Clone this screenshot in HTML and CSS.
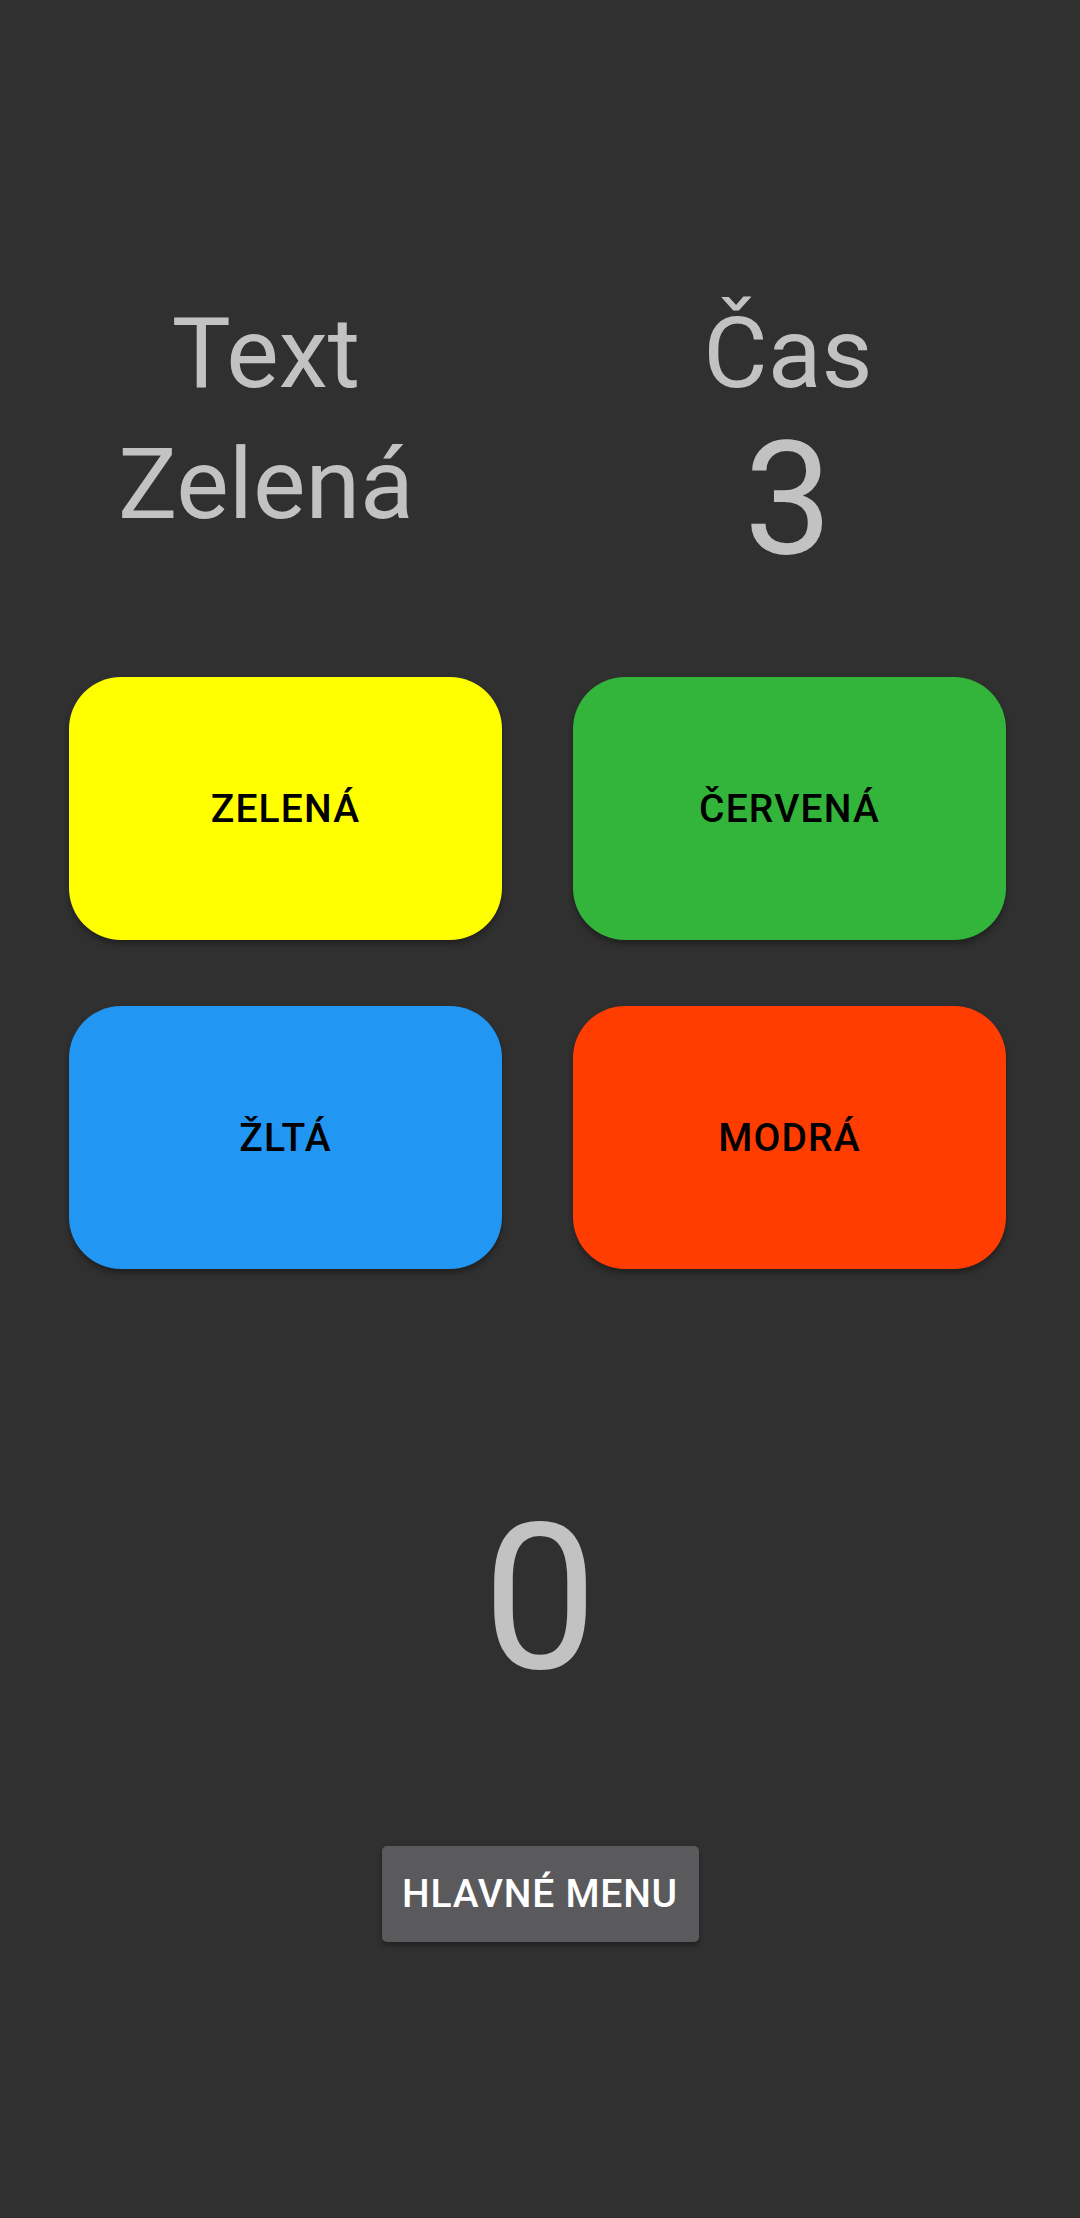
FILE: index.html
```html
<!DOCTYPE html>
<html lang="sk">
<head>
<meta charset="utf-8">
<title>Hra farieb</title>
<link rel="stylesheet" href="styles.css">
</head>
<body>
<main class="screen">
  <section class="header">
    <div class="col col-left">
      <div class="label">Text</div>
      <div class="label">Zelená</div>
    </div>
    <div class="col col-right">
      <div class="label">Čas</div>
      <div class="timer">3</div>
    </div>
  </section>
  <section class="choices">
    <button class="choice yellow">ZELENÁ</button>
    <button class="choice green">ČERVENÁ</button>
    <button class="choice blue">ŽLTÁ</button>
    <button class="choice red">MODRÁ</button>
  </section>
  <div class="score">0</div>
  <div class="menu-wrap">
    <button class="menu-btn">HLAVNÉ MENU</button>
  </div>
</main>
</body>
</html>
```
FILE: styles.css
```css
html, body {
  margin: 0;
  padding: 0;
  background: #303030;
}
body {
  width: 1080px;
  height: 2218px;
  font-family: Roboto, "Noto Sans", sans-serif;
  overflow: hidden;
}
.screen {
  display: flex;
  flex-direction: column;
  padding-top: 288px;
}
.header {
  display: grid;
  grid-template-columns: 532px 512px;
  align-items: start;
}
.col {
  display: flex;
  flex-direction: column;
  align-items: center;
}
.label {
  font-size: 99px;
  line-height: 131px;
  color: #c2c2c2;
  font-weight: 400;
}
.timer {
  font-size: 157px;
  line-height: 161px;
  color: #c2c2c2;
}
.choices {
  margin-top: 97px;
  padding-left: 69px;
  display: grid;
  grid-template-columns: 433px 433px;
  grid-auto-rows: 263px;
  column-gap: 71px;
  row-gap: 66px;
}
.choice {
  border: none;
  border-radius: 52px;
  font-family: Roboto, "Noto Sans", sans-serif;
  font-weight: 500;
  font-size: 39px;
  letter-spacing: 0.03em;
  color: #000;
  box-shadow: 0 4px 6px rgba(0, 0, 0, 0.35);
  padding: 0;
}
.yellow { background: #ffff00; }
.green { background: #32b53a; }
.blue { background: #2196f3; }
.red { background: #ff3d00; }
.score {
  margin-top: 210px;
  text-align: center;
  font-size: 204px;
  line-height: 239px;
  color: #c2c2c2;
}
.menu-wrap {
  margin-top: 128px;
  display: flex;
  justify-content: center;
}
.menu-btn {
  width: 317px;
  height: 96px;
  border: none;
  border-radius: 5px;
  background: #5a5a5c;
  color: #ffffff;
  font-family: Roboto, "Noto Sans", sans-serif;
  font-weight: 500;
  font-size: 39px;
  letter-spacing: 0.02em;
  padding: 0;
  box-shadow: 0 3px 5px rgba(0, 0, 0, 0.35);
}
```
